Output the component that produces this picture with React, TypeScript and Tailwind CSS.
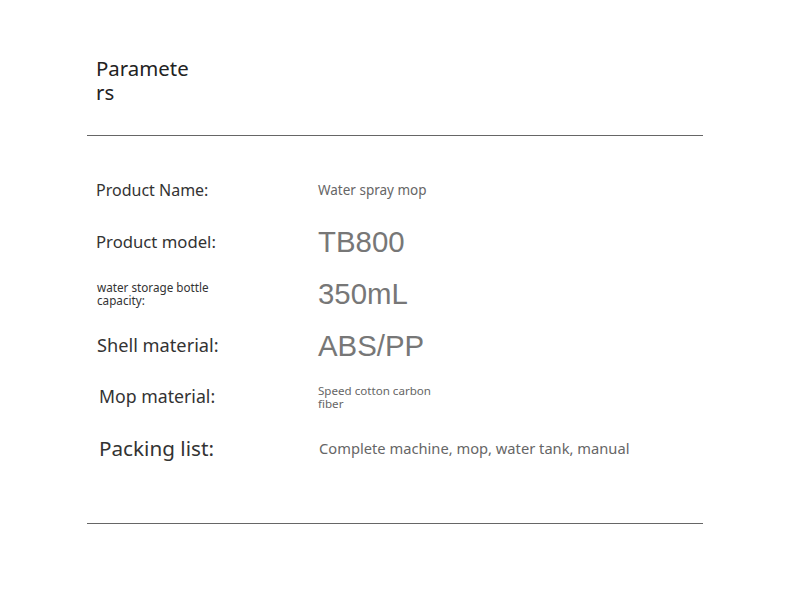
const rows = [
  { label: "Product Name:", labelCls: "text-[16px] pl-[9px]", value: "Water spray mop", valueCls: "text-[13.5px] text-[#666] font-['Noto_Sans',sans-serif]", h: "h-[52px]" },
  { label: "Product model:", labelCls: "text-[16.7px] pl-[9px]", value: "TB800", valueCls: "text-[29.4px] text-[#777] font-['Liberation_Sans',sans-serif]", h: "h-[52px]" },
  { label: "water storage bottle capacity:", labelCls: "text-[11.7px] leading-[13px] pl-[10px] w-[140px]", value: "350mL", valueCls: "text-[29.4px] text-[#777] font-['Liberation_Sans',sans-serif]", h: "h-[52px]" },
  { label: "Shell material:", labelCls: "text-[18.2px] pl-[10px]", value: "ABS/PP", valueCls: "text-[29.4px] text-[#777] font-['Liberation_Sans',sans-serif]", h: "h-[52px]" },
  { label: "Mop material:", labelCls: "text-[17.7px] pl-[12px]", value: "Speed cotton carbon fiber", valueCls: "text-[11.6px] leading-[13px] text-[#666] w-[130px] font-['Noto_Sans',sans-serif]", h: "h-[49px]" },
  { label: "Packing list:", labelCls: "text-[20.7px] pl-[12px]", value: "Complete machine, mop, water tank, manual", valueCls: "text-[14.7px] text-[#666] pl-px font-['Noto_Sans',sans-serif]", h: "h-[55px]" },
];

export default function App() {
  return (
    <div className="w-[790px] h-[590px] bg-white font-['Noto_Sans',sans-serif] text-[#333]">
      <div className="pt-[56px] px-[87px]">
        <h1 className="pl-[9px] w-[108px] text-[20.4px] leading-[24px] break-all font-normal text-[#222]">
          Parameters
        </h1>
        <div className="mt-[31px] border-t border-[#666]" />
        <div className="pt-[28px] flex flex-col">
          {rows.map((row, i) => (
            <div key={i} className={`flex items-center ${row.h}`}>
              <div className="w-[231px] shrink-0">
                <div className={row.labelCls}>{row.label}</div>
              </div>
              <div className={row.valueCls}>{row.value}</div>
            </div>
          ))}
        </div>
        <div className="mt-[47px] border-t border-[#666]" />
      </div>
    </div>
  );
}
